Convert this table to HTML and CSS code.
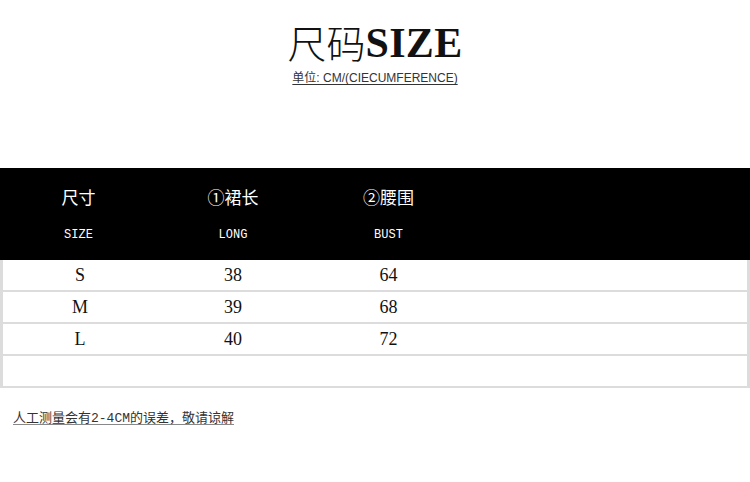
FILE: index.html
```html
<!DOCTYPE html>
<html lang="zh">
<head>
<meta charset="utf-8">
<title>尺码SIZE</title>
<link rel="stylesheet" href="styles.css">
</head>
<body>
<div class="page">
  <header class="title-block">
    <h1 class="title"><span class="title-cn">尺码</span><span class="title-en">SIZE</span></h1>
    <p class="unit">单位: CM/(CIECUMFERENCE)</p>
  </header>

  <section class="size-table">
    <div class="thead">
      <div class="hrow hrow-cn">
        <span>尺寸</span><span>①裙长</span><span>②腰围</span><span></span>
      </div>
      <div class="hrow hrow-en">
        <span>SIZE</span><span>LONG</span><span>BUST</span><span></span>
      </div>
    </div>
    <div class="row"><span>S</span><span>38</span><span>64</span><span></span></div>
    <div class="row"><span>M</span><span>39</span><span>68</span><span></span></div>
    <div class="row"><span>L</span><span>40</span><span>72</span><span></span></div>
    <div class="row"><span></span><span></span><span></span><span></span></div>
  </section>

  <p class="note">人工测量会有2-4CM的误差，敬请谅解</p>
</div>
</body>
</html>
```

FILE: styles.css
```css
html, body {
  margin: 0;
  padding: 0;
  background: #ffffff;
}

.page {
  width: 750px;
  font-family: "Noto Sans CJK SC", sans-serif;
  color: #111;
}

.title-block {
  padding-top: 18px;
  text-align: center;
}

.title {
  margin: 0;
  height: 46px;
  line-height: 46px;
  font-weight: normal;
  display: flex;
  justify-content: center;
  align-items: center;
}

.title-cn {
  font-family: "Noto Sans CJK SC", sans-serif;
  font-weight: 300;
  font-size: 39px;
  color: #111;
}

.title-en {
  font-family: "Liberation Serif", serif;
  font-weight: bold;
  font-size: 42px;
  letter-spacing: 0.3px;
  color: #111;
  position: relative;
  top: 2px;
}

.unit {
  margin: 7px 0 0;
  font-family: "Liberation Sans", "Noto Sans CJK SC", sans-serif;
  font-size: 12px;
  line-height: 14px;
  color: #333;
  text-decoration: underline;
  text-underline-offset: 2px;
}

.size-table {
  margin-top: 83px;
}

.thead {
  background: #000;
  color: #fff;
  padding: 17px 0 16px;
}

.hrow {
  display: grid;
  grid-template-columns: 157px 152px 159px 1fr;
  text-align: center;
}

.hrow-cn {
  font-family: "Noto Sans CJK SC", serif;
  font-size: 17px;
  line-height: 24px;
}

.hrow-en {
  margin-top: 17px;
  font-family: "Liberation Mono", monospace;
  font-size: 12px;
  line-height: 18px;
}

.row {
  display: grid;
  grid-template-columns: 154px 152px 159px 1fr;
  height: 30px;
  align-items: center;
  text-align: center;
  border-left: 3px solid #dcdcdc;
  border-right: 3px solid #dcdcdc;
  border-bottom: 2px solid #dcdcdc;
  font-family: "Liberation Serif", serif;
  font-size: 18px;
  color: #111;
}

.note {
  margin: 23px 0 0;
  padding-left: 13px;
  font-family: "Liberation Mono", "Noto Sans CJK SC", monospace;
  font-size: 13px;
  line-height: 16px;
  color: #333;
  text-decoration: underline;
  text-decoration-color: #888;
  text-underline-offset: 2px;
}
```
